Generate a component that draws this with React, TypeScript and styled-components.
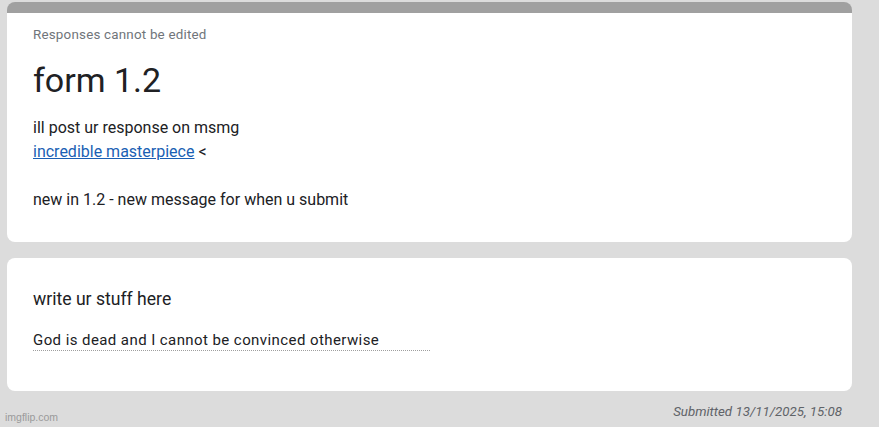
import styled, { createGlobalStyle } from "styled-components";

const GlobalStyle = createGlobalStyle`
  html, body {
    margin: 0;
    padding: 0;
    background: #dcdcdc;
    font-family: Roboto, "Liberation Sans", Arial, sans-serif;
  }
`

const Page = styled.div`
  position: relative;
  width: 879px;
  height: 427px;
  box-sizing: border-box;
  padding: 2px 27px 0 7px;
  display: flex;
  flex-direction: column;
  gap: 16px;
  overflow: hidden;
`

const Card = styled.section<{ $accent?: boolean }>`
  background: #fff;
  border-radius: 8px;
  border-top: ${(props) => props.$accent ? '11px solid #a0a0a0' : 'none'};
  padding: ${(props) => props.$accent ? '12px 26px 30px' : '29px 26px 40px'};
  display: flex;
  flex-direction: column;
`

const Notice = styled.div`
  font-size: 13.4px;
  line-height: 20px;
  color: #70757a;
  letter-spacing: 0.2px;
`

const Title = styled.h1`
  margin: 13px 0 0;
  font-size: 34px;
  font-weight: 400;
  line-height: 44px;
  color: #202124;
`

const Description = styled.div`
  margin-top: 14px;
  font-size: 16px;
  line-height: 24px;
  color: #202124;
  white-space: pre-wrap;

  & a {
    color: #1a5fb4;
    text-decoration: underline;
  }
`

const Question = styled.div`
  font-size: 17.6px;
  line-height: 24px;
  color: #202124;
`

const Answer = styled.div`
  margin-top: 19px;
  width: 397px;
  border-bottom: 1px dotted #9e9e9e;
  font-size: 15px;
  line-height: 20px;
  letter-spacing: 0.42px;
  color: #202124;
`

const Footer = styled.div`
  display: flex;
  justify-content: flex-end;
  padding-right: 10px;
  margin-top: -3px;
  font-size: 13.3px;
  font-style: italic;
  color: #5f6368;
`

const Watermark = styled.div`
  position: absolute;
  left: 5px;
  bottom: 4px;
  font-size: 10.5px;
  color: #9a9a9a;
  font-family: "Liberation Sans", Arial, sans-serif;
`

const App: React.FC = () => {
    return (
        <>
            <GlobalStyle />
            <Page>
                <Card $accent>
                    <Notice>Responses cannot be edited</Notice>
                    <Title>form 1.2</Title>
                    <Description>
                        ill post ur response on msmg{"\n"}
                        <a href="#">incredible masterpiece</a> &lt;{"\n\n"}
                        new in 1.2 - new message for when u submit
                    </Description>
                </Card>
                <Card>
                    <Question>write ur stuff here</Question>
                    <Answer>God is dead and I cannot be convinced otherwise</Answer>
                </Card>
                <Footer>Submitted 13/11/2025, 15:08</Footer>
                <Watermark>imgflip.com</Watermark>
            </Page>
        </>
    )
}

export default App
